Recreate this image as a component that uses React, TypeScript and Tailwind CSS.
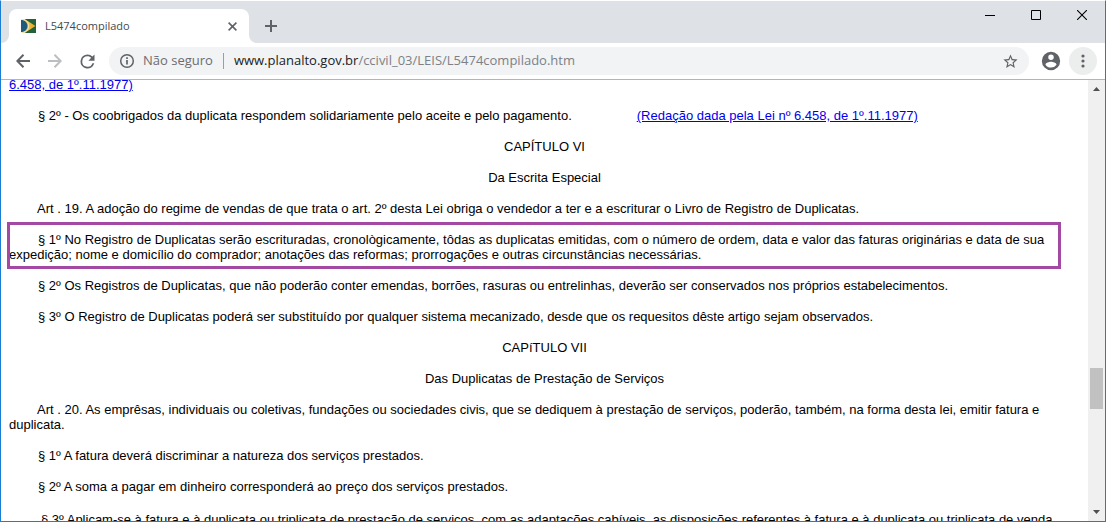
import type { ReactNode } from "react";

const Favicon = () => (
  <svg width="15" height="14" viewBox="0 0 15 14" aria-hidden="true">
    <defs>
      <linearGradient id="gold" x1="0" x2="1">
        <stop offset="0" stopColor="#f5eec8" />
        <stop offset="0.5" stopColor="#efc04a" />
        <stop offset="1" stopColor="#e3a21c" />
      </linearGradient>
    </defs>
    <rect width="15" height="14" fill="#23613a" />
    <path d="M0 0h3.5l11 7-11 7H0z" fill="url(#gold)" />
    <path d="M0 1c4 0 6.5 2.7 6.5 6S4 13 0 13z" fill="#1f5a7c" />
    <path d="M1.5 0c4.5 1.2 6.2 4 6.2 7s-1.7 5.800-6.200 7" fill="none" stroke="#f3e6b0" />
  </svg>
);

function ToolButton({ label, children }: { label: string; children: ReactNode }) {
  return (
    <button aria-label={label} className="flex size-7 shrink-0 items-center justify-center">
      {children}
    </button>
  );
}

function TabStrip() {
  return (
    <div className="flex h-[42px] items-end bg-[#dee1e6] pl-2">
      <div className="relative flex h-[34px] w-60 items-center rounded-t-lg bg-white px-3">
        {/* curved feet of the active tab */}
        <span className="absolute bottom-0 -left-2 size-2 bg-white">
          <span className="block size-2 rounded-br-lg bg-[#dee1e6]" />
        </span>
        <span className="absolute -right-2 bottom-0 size-2 bg-white">
          <span className="block size-2 rounded-bl-lg bg-[#dee1e6]" />
        </span>
        <Favicon />
        <span className="ml-[9px] flex-1 text-[11px] text-[#45494d]">L5474compilado</span>
        <button aria-label="Fechar guia">
          <svg width="9" height="9" viewBox="0 0 9 9" stroke="#5f6368" strokeWidth="1.6">
            <path d="M.6.6l7.8 7.8M8.4.6L.6 8.4" />
          </svg>
        </button>
      </div>
      <button aria-label="Nova guia" className="mb-[11px] ml-4">
        <svg width="12" height="12" viewBox="0 0 12 12" stroke="#5f6368" strokeWidth="2">
          <path d="M6 0v12M0 6h12" />
        </svg>
      </button>
      <div className="ml-auto flex self-start">
        <button aria-label="Minimizar" className="flex h-7 w-[46px] items-center justify-center">
          <svg width="10" height="10" viewBox="0 0 10 10" stroke="#000">
            <path d="M0 5.5h10" />
          </svg>
        </button>
        <button aria-label="Maximizar" className="flex h-7 w-[46px] items-center justify-center">
          <svg width="10" height="10" viewBox="0 0 10 10" fill="none" stroke="#000">
            <path d="M.5.5h9v9h-9z" />
          </svg>
        </button>
        <button aria-label="Fechar" className="flex h-7 w-[46px] items-center justify-center">
          <svg width="10" height="10" viewBox="0 0 10 10" stroke="#000" strokeWidth="1.1">
            <path d="M0 0l10 10M10 0L0 10" />
          </svg>
        </button>
      </div>
    </div>
  );
}

function Toolbar() {
  return (
    <div className="flex h-[37px] items-center border-b border-[#b4b4b6] px-2">
      <ToolButton label="Voltar">
        <svg width="14" height="14" viewBox="0 0 14 14" fill="none" stroke="#5f6368" strokeWidth="2">
          <path d="M14 7H1.5M7.5.8L1.3 7l6.2 6.2" />
        </svg>
      </ToolButton>
      <span className="ml-1 flex">
        <ToolButton label="Avançar">
          <svg width="14" height="14" viewBox="0 0 14 14" fill="none" stroke="#bcbec1" strokeWidth="2">
            <path d="M0 7h12.5M6.5.8L12.7 7l-6.2 6.2" />
          </svg>
        </ToolButton>
      </span>
      <span className="ml-1 flex">
        <ToolButton label="Recarregar">
          <svg width="21" height="21" viewBox="0 0 24 24" fill="#5f6368">
            <path d="M17.65 6.35A7.96 7.96 0 0 0 12 4a8 8 0 1 0 7.73 10h-2.08A6 6 0 1 1 12 6c1.66 0 3.14.69 4.22 1.78L13 11h7V4z" />
          </svg>
        </ToolButton>
      </span>
      <div className="ml-2 flex h-7 flex-1 items-center rounded-full bg-[#f1f3f4] px-[10px] text-[13px]">
        <svg width="16" height="16" viewBox="0 0 16 16" fill="none" stroke="#5f6368" strokeWidth="1.5">
          <circle cx="8" cy="8" r="6.3" />
          <path d="M8 7v4.500M8 4.300V6" strokeWidth="1.700" />
        </svg>
        <span className="ml-2 shrink-0 text-[#6a6e73]">Não seguro</span>
        <span className="mx-[10px] h-4 w-px bg-[#9a9da1]" />
        <a href="#pagina" className="flex-1 text-[#7d8186]">
          <span className="text-[#202124]">www.planalto.gov.br</span>
          /ccivil_03/LEIS/L5474compilado.htm
        </a>
        <button aria-label="Adicionar aos favoritos">
          <svg width="17" height="17" viewBox="0 0 24 24" fill="#5f6368">
            <path d="M22 9.24l-7.19-.62L12 2 9.19 8.63 2 9.24l5.46 4.73L5.82 21 12 17.27 18.18 21l-1.63-7.03L22 9.24zM12 15.4l-3.76 2.27 1-4.28-3.32-2.88 4.38-.38L12 6.1l1.71 4.04 4.38.38-3.32 2.88 1 4.28L12 15.4z" />
          </svg>
        </button>
      </div>
      <span className="ml-2 flex">
        <ToolButton label="Perfil">
          <svg width="22" height="22" viewBox="0 0 24 24" fill="#5f6368">
            <path d="M12 2a10 10 0 1 0 0 20 10 10 0 0 0 0-20zm0 3a3 3 0 1 1 0 6 3 3 0 0 1 0-6zm0 14.2a7.2 7.2 0 0 1-6-3.22c.03-1.99 4-3.08 6-3.08s5.97 1.09 6 3.08a7.2 7.2 0 0 1-6 3.22z" />
          </svg>
        </ToolButton>
      </span>
      <button
        aria-label="Menu"
        className="ml-1 flex size-7 shrink-0 items-center justify-center rounded-full bg-[#eceded]"
      >
        <svg width="4" height="14" viewBox="0 0 4 14" fill="#5f6368">
          <circle cx="2" cy="2" r="1.6" />
          <circle cx="2" cy="7" r="1.6" />
          <circle cx="2" cy="12" r="1.6" />
        </svg>
      </button>
    </div>
  );
}

const Article = ({ children }: { children: ReactNode }) => <p className="indent-7">{children}</p>;

const Paragraph = ({ children }: { children: ReactNode }) => <p className="indent-[29px]">{children}</p>;

const Amendment = ({ children }: { children: ReactNode }) => (
  <a href="#lei6458" className="text-[#0000ee] underline">
    {children}
  </a>
);

function LawText() {
  return (
    <main
      id="pagina"
      className="-mt-[3px] flex min-w-0 flex-1 flex-col gap-4 px-2 font-['Liberation_Sans',Arial,sans-serif] text-[13px] leading-[15px] text-black"
    >
      <p>
        <Amendment>6.458, de 1º.11.1977)</Amendment>
      </p>
      <Paragraph>
        § 2º - Os coobrigados da duplicata respondem solidariamente pelo aceite e pelo pagamento.
        <span className="ml-[65px] inline-block indent-0">
          <Amendment>(Redação dada pela Lei nº 6.458, de 1º.11.1977)</Amendment>
        </span>
      </Paragraph>
      <h2 className="text-center">CAPÍTULO VI</h2>
      <h3 className="text-center">Da Escrita Especial</h3>
      <Article>
        Art . 19. A adoção do regime de vendas de que trata o art. 2º desta Lei obriga o vendedor a ter e a
        escriturar o Livro de Registro de Duplicatas.
      </Article>
      <div className="relative">
        <Paragraph>
          § 1º No Registro de Duplicatas serão escrituradas, cronològicamente, tôdas as duplicatas emitidas, com
          o número de ordem, data e valor das faturas originárias e data de sua expedição; nome e domicílio do
          comprador; anotações das reformas; prorrogações e outras circunstâncias necessárias.
        </Paragraph>
        {/* highlight frame */}
        <span className="pointer-events-none absolute -top-[10px] right-[19px] -bottom-[7px] -left-[2px] border-3 border-[#a349a4]" />
      </div>
      <Paragraph>
        § 2º Os Registros de Duplicatas, que não poderão conter emendas, borrões, rasuras ou entrelinhas, deverão
        ser conservados nos próprios estabelecimentos.
      </Paragraph>
      <Paragraph>
        § 3º O Registro de Duplicatas poderá ser substituído por qualquer sistema mecanizado, desde que os
        requesitos dêste artigo sejam observados.
      </Paragraph>
      <h2 className="text-center">CAPíTULO VII</h2>
      <h3 className="text-center">Das Duplicatas de Prestação de Serviços</h3>
      <Article>
        Art . 20. As emprêsas, individuais ou coletivas, fundações ou sociedades civis, que se dediquem à
        prestação de serviços, poderão, também, na forma desta lei, emitir fatura e duplicata.
      </Article>
      <Paragraph>§ 1º A fatura deverá discriminar a natureza dos serviços prestados.</Paragraph>
      <Paragraph>§ 2º A soma a pagar em dinheiro corresponderá ao preço dos serviços prestados.</Paragraph>
      <p className="pt-[2px] indent-8">
        § 3º Aplicam-se à fatura e à duplicata ou triplicata de prestação de serviços, com as adaptações cabíveis,
        as disposições referentes à fatura e à duplicata ou triplicata de venda
      </p>
    </main>
  );
}

function Scrollbar() {
  return (
    <div className="flex w-[17px] shrink-0 flex-col items-center bg-[#f0f0f0] py-[7px]">
      <svg width="7" height="4" viewBox="0 0 7 4" fill="#505050" className="shrink-0">
        <path d="M3.5 0L7 4H0z" />
      </svg>
      <div className="flex-[277]" />
      <div className="h-[41px] w-[13px] bg-[#c1c1c1]" />
      <div className="flex-[101]" />
      <svg width="7" height="4" viewBox="0 0 7 4" fill="#505050" className="shrink-0">
        <path d="M3.5 4L7 0H0z" />
      </svg>
    </div>
  );
}

export default function App() {
  return (
    <div className="flex h-screen flex-col overflow-hidden border border-[#1a7fd4] border-t-white bg-white font-['Open_Sans','Noto_Sans',sans-serif]">
      <TabStrip />
      <Toolbar />
      <div className="flex min-h-0 flex-1 overflow-hidden">
        <LawText />
        <Scrollbar />
      </div>
    </div>
  );
}
